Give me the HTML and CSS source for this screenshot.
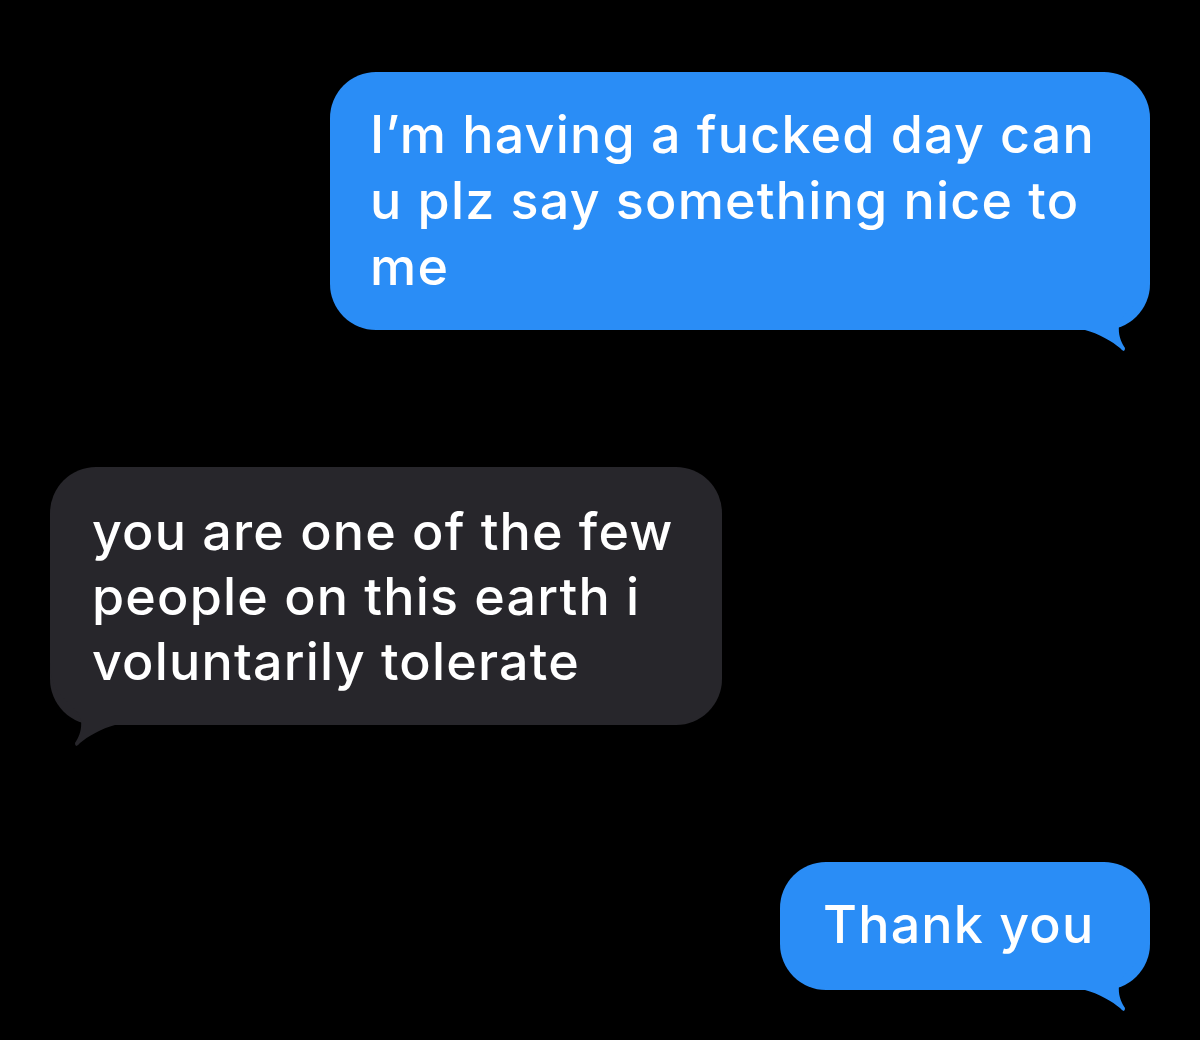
FILE: index.html
```html
<!DOCTYPE html>
<html>
<head>
<meta charset="utf-8">
<link rel="stylesheet" href="styles.css">
</head>
<body>
<main class="thread">
  <div class="row row-out">
    <div class="bubble out b1">
      <svg class="tail tail-out" viewBox="0 0 80 85" aria-hidden="true"><path d="M0,63 L15,63 C28,66 43,75 50,81 Q55,87 55,81 C51,75 48,68 49,58 C52,47 65,40 73,28 C78,20 80,10 80,0 L0,0 Z"/></svg>
      <p class="text">I’m having a fucked day can<br>u plz say something nice to<br>me</p>
    </div>
  </div>
  <div class="row row-in">
    <div class="bubble in b2">
      <svg class="tail tail-in" viewBox="0 0 80 85" aria-hidden="true"><path d="M80,63 L65,63 C52,66 37,75 30,81 Q25,87 25,81 C29,75 32,68 31,58 C28,47 15,40 7,28 C2,20 0,10 0,0 L80,0 Z"/></svg>
      <p class="text">you are one of the few<br>people on this earth i<br>voluntarily tolerate</p>
    </div>
  </div>
  <div class="row row-out">
    <div class="bubble out b3">
      <svg class="tail tail-out" viewBox="0 0 80 85" aria-hidden="true"><path d="M0,63 L15,63 C28,66 43,75 50,81 Q55,87 55,81 C51,75 48,68 49,58 C52,47 65,40 73,28 C78,20 80,10 80,0 L0,0 Z"/></svg>
      <p class="text">Thank you</p>
    </div>
  </div>
</main>
</body>
</html>
```
FILE: styles.css
```css
html, body {
  margin: 0;
  padding: 0;
  background: #000;
}
body {
  width: 1200px;
  height: 1040px;
  overflow: hidden;
  font-family: Inter, "Liberation Sans", sans-serif;
}
.thread {
  display: flex;
  flex-direction: column;
  gap: 137px;
  padding: 72px 50px 0 50px;
}
.row {
  display: flex;
}
.row-out { justify-content: flex-end; }
.row-in { justify-content: flex-start; }
.bubble {
  position: relative;
  box-sizing: border-box;
  border-radius: 46px;
  padding: 30px 40px 0 40px;
}
.out { background: #2a8df6; }
.in { background: #27262b; }
.b1 { width: 820px; height: 258px; }
.b2 { width: 672px; height: 258px; padding-top: 32px; padding-left: 42px; }
.b3 { width: 370px; height: 128px; padding-left: 43px; }
.text {
  position: relative;
  z-index: 1;
  margin: 0;
  color: #fff;
  font-size: 52px;
  line-height: 66px;
  font-weight: 500;
  letter-spacing: 1.2px;
  white-space: nowrap;
}
.b2 .text { line-height: 65px; }
.tail {
  position: absolute;
  width: 80px;
  height: 85px;
  bottom: -22px;
  z-index: 0;
}
.tail-out { right: 0; fill: #2a8df6; }
.tail-in { left: 0; fill: #27262b; }
```
